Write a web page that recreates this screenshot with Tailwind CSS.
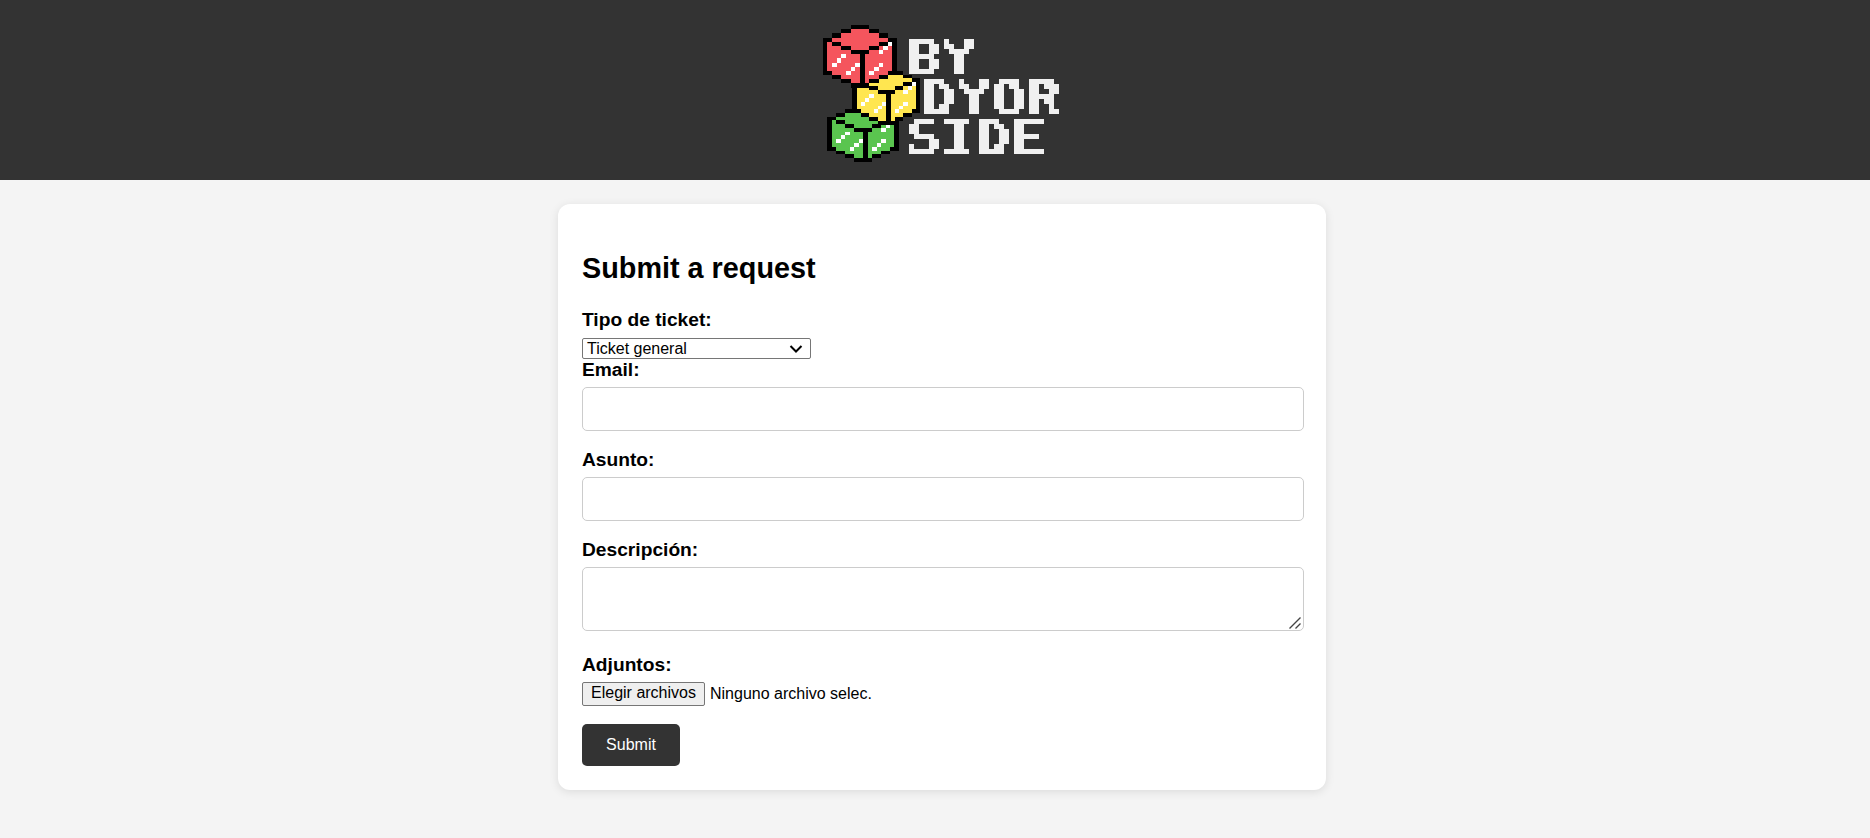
<!DOCTYPE html>
<html lang="es">
<head>
<meta charset="utf-8">
<title>Submit a request</title>
<script src="https://cdn.jsdelivr.net/npm/@tailwindcss/browser@4"></script>
</head>
<body class="min-h-screen bg-[#f4f4f4] font-['Liberation_Sans',Arial,sans-serif] text-black">
<header class="flex h-[180px] justify-center bg-[#333]">
  <svg class="h-[180px] w-[250px]" viewBox="810 0 250 180" role="img" aria-label="By Dyor Side">
    <defs>
      <!-- samples the lettering once per 5px cell for a pixel-font look -->
      <filter id="pixels" filterUnits="userSpaceOnUse" x="909" y="39" width="150" height="120" color-interpolation-filters="sRGB">
        <feFlood x="911" y="41" width="1" height="1" flood-color="#000" result="dot"/>
        <feOffset in="dot" x="909" y="39" width="5" height="5" result="cell"/>
        <feTile in="cell" result="grid"/>
        <feComposite in="SourceGraphic" in2="grid" operator="in"/>
        <feComponentTransfer><feFuncA type="discrete" tableValues="0 1"/></feComponentTransfer>
        <feMorphology operator="dilate" radius="2"/>
      </filter>
      <g id="shape" shape-rendering="crispEdges">
        <path d="M6 1h4v1h2v1h2v1h1v8h-1v1h-2v1h-2v1h-4v-1h-2v-1h-2v-1h-1v-8h1v-1h2v-1h2z"/>
        <g fill="#000"><path d="M6 0h4v1h-4zM4 1h2v1h-2zM10 1h2v1h-2zM2 2h2v1h-2zM12 2h2v1h-2zM0 3h2v1h-2zM14 3h2v1h-2zM0 4h1v8h-1zM15 4h1v8h-1zM2 4h2v1h-2zM12 4h2v1h-2zM4 5h2v1h-2zM10 5h2v1h-2zM6 6h4v1h-4zM8 7h1v7h-1zM1 11h1v1h-1zM14 11h1v1h-1zM2 12h2v1h-2zM12 12h2v1h-2zM4 13h2v1h-2zM10 13h2v1h-2zM6 14h4v1h-4z"/></g>
        <path fill="#fff" d="M14 4h1v1h-1zM13 5h1v1h-1zM12 6h1v1h-1zM4 7h1v1h-1zM3 8h1v1h-1zM2 9h1v1h-1zM7 9h1v1h-1zM6 10h1v1h-1zM5 11h1v1h-1zM12 9h1v1h-1zM11 10h1v1h-1zM10 11h1v1h-1z"/>
      </g>
    </defs>
    <use href="#shape" fill="#5ac54f" transform="translate(827.3 105.2) scale(4.48 3.78)"/>
    <use href="#shape" fill="#ffe650" transform="translate(852.3 66.8) scale(4.25 3.87)"/>
    <use href="#shape" fill="#f5555d" transform="translate(822.7 25) scale(4.65 4.17)"/>
    <g fill="#f0f0f0" filter="url(#pixels)" font-family="'DejaVu Sans Mono',monospace" font-weight="700" font-size="47">
      <text x="906" y="73.500" textLength="70" lengthAdjust="spacingAndGlyphs">BY</text>
      <text x="921" y="113.500" textLength="140" lengthAdjust="spacingAndGlyphs">DYOR</text>
      <text x="906" y="153.500" textLength="140" lengthAdjust="spacingAndGlyphs">SIDE</text>
    </g>
  </svg>
</header>
<main class="mt-6 ml-[558px] h-[586px] w-[768px] rounded-xl bg-white px-6 pt-[46px] shadow-[0_2px_10px_rgba(0,0,0,0.1)]">
  <h1 class="h-[57px] text-[28.8px] leading-9 font-bold">Submit a request</h1>
  <form>
    <label class="block h-[31px] pt-px text-[19.2px] leading-6 font-bold">Tipo de ticket:</label>
    <div class="flex h-[21px] w-[229px] items-center justify-between rounded-[2px] border border-[#767676] pr-[7px] pl-1 text-base leading-[19px]">
      <span>Ticket general</span>
      <svg class="h-2 w-3.5" viewBox="0 0 14 8" fill="none" stroke="#000" stroke-width="2"><path d="M1.500 1l5.500 5.500 5.500-5.500"/></svg>
    </div>
    <label class="block h-7 text-[19.2px] leading-[22px] font-bold">Email:</label>
    <input class="block h-11 w-[722px] rounded-[5px] border border-[#ccc] bg-white px-3 outline-none">
    <label class="mt-[18px] block h-7 text-[19.2px] leading-[22px] font-bold">Asunto:</label>
    <input class="block h-11 w-[722px] rounded-[5px] border border-[#ccc] bg-white px-3 outline-none">
    <label class="mt-[18px] block h-7 text-[19.2px] leading-[22px] font-bold">Descripción:</label>
    <div class="flex h-16 w-[722px] items-end justify-end rounded-[5px] border border-[#ccc] pr-0.5 pb-px">
      <svg class="h-3 w-3" viewBox="0 0 12 12" stroke="#444" stroke-width="1.400"><path d="M.5 11.500L11.500 .5M6.500 11.500l5-5"/></svg>
    </div>
    <label class="mt-[23px] block h-7 text-[19.2px] leading-[22px] font-bold">Adjuntos:</label>
    <div class="flex h-6 items-center text-base">
      <button type="button" class="h-6 w-[123px] rounded-[2px] border border-[#767676] bg-[#efefef] pb-0.5 leading-5 whitespace-nowrap">Elegir archivos</button>
      <span class="ml-[5px] leading-6">Ninguno archivo selec.</span>
    </div>
    <button type="button" class="mt-[18px] block h-[42px] w-[98px] rounded-[5px] bg-[#333] text-base leading-[42px] text-white">Submit</button>
  </form>
</main>
</body>
</html>
